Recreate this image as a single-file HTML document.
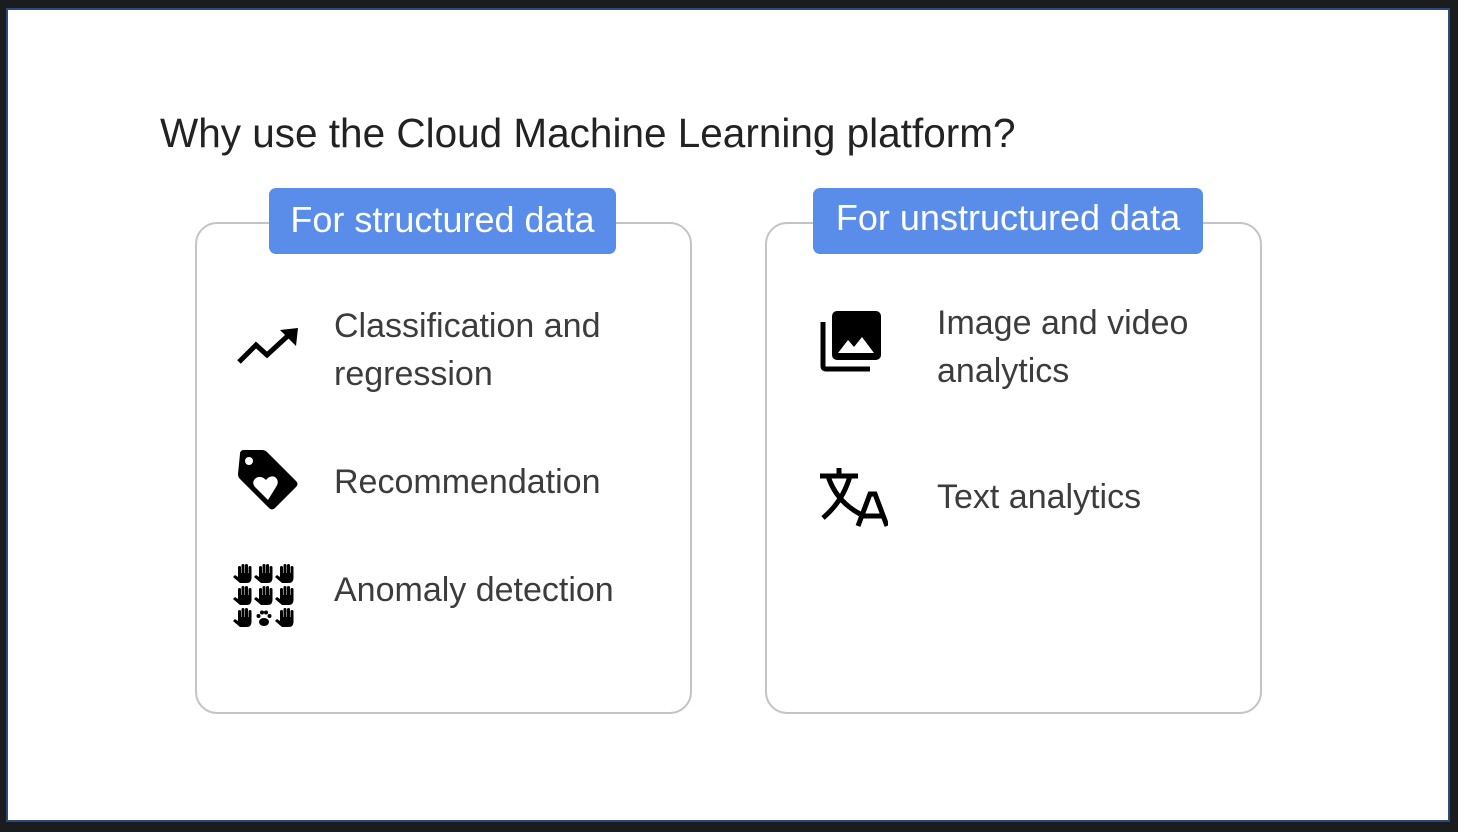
<!DOCTYPE html>
<html><head><style>
body{margin:0;width:1458px;height:832px;background:#1b1c1e;position:relative;overflow:hidden;font-family:"Liberation Sans",sans-serif}
.slide{position:absolute;left:6px;top:8px;width:1440px;height:810px;background:#fff;border:2px solid #2c4a7c}
.a{position:absolute}
.box{position:absolute;top:222px;width:493px;height:488px;border:2px solid #c4c4c4;border-radius:22px}
.pill{position:absolute;top:188px;height:66px;background:#5a8cea;border-radius:7px;color:#fff;font-size:36px;line-height:64px;text-align:center}
.t{position:absolute;font-size:34px;color:#3c3c3c;line-height:48px}
</style></head><body>
<div class="slide"></div>
<div class="a" style="left:160px;top:110px;font-size:40.5px;color:#222">Why use the Cloud Machine Learning platform?</div>
<div class="box" style="left:195px"></div>
<div class="box" style="left:765px"></div>
<div class="pill" style="left:269px;width:347px">For structured data</div>
<div class="pill" style="left:813px;width:390px;line-height:60px">For unstructured data</div>

<svg class="a" style="left:236px;top:326px" width="64" height="40" viewBox="0 0 64 40"><path d="M3 36 L20 19 L31 29 L56 6" fill="none" stroke="#000" stroke-width="5"/><path d="M44 4 L62 2 L60 20 Z" fill="#000"/></svg>
<div class="t" style="left:334px;top:302px">Classification and<br>regression</div>

<svg class="a" style="left:236px;top:448px" width="64" height="64" viewBox="0 0 64 64"><path d="M4 6 Q4 2 8 2 L26 2 Q29 2 31 4 L60 33 Q63 36 60 39 L39 60 Q36 63 33 60 L4 31 Q2 29 2 26 Z" fill="#000"/><circle cx="13" cy="13" r="4" fill="#fff"/><path d="M32 52 L19 39 Q15 34 20 30 Q25 27 30 32 Q34 27 39 29 Q44 33 40 39 Z" fill="#fff"/></svg>
<div class="t" style="left:334px;top:458px">Recommendation</div>

<svg class="a" style="left:232px;top:563px" width="64" height="66" viewBox="0 0 64 66">
<g id="h" fill="#000"><rect x="6" y="3" width="3" height="10" rx="1.5"/><rect x="9.5" y="1" width="3" height="12" rx="1.5"/><rect x="13" y="1" width="3" height="12" rx="1.5"/><rect x="16.5" y="3" width="3" height="10" rx="1.5"/><path d="M6 10 H19.5 V15 Q19.5 20 14.5 20 H8 L1 14 L3 12 L6 14 Z"/></g>
<use href="#h" x="21"/><use href="#h" x="42"/>
<use href="#h" y="22"/><use href="#h" x="21" y="22"/><use href="#h" x="42" y="22"/>
<use href="#h" y="44"/><use href="#h" x="42" y="44"/>
<g fill="#000"><ellipse cx="32" cy="59" rx="5" ry="4"/><circle cx="26.5" cy="53" r="2"/><circle cx="30" cy="49.5" r="2"/><circle cx="34" cy="49.5" r="2"/><circle cx="37.5" cy="53" r="2"/></g>
</svg>
<div class="t" style="left:334px;top:566px">Anomaly detection</div>

<svg class="a" style="left:818px;top:308px" width="66" height="66" viewBox="0 0 66 66"><path d="M5 14 V58 Q5 61 8 61 H52" fill="none" stroke="#000" stroke-width="5"/><rect x="14" y="3" width="49" height="49" rx="5" fill="#000"/><path d="M20 45 L30 32 L36 39 L44 29 L56 45 Z" fill="#fff"/></svg>
<div class="t" style="left:937px;top:299px">Image and video<br>analytics</div>

<svg class="a" style="left:818px;top:466px" width="70" height="64" viewBox="0 0 70 64"><path d="M2 10 H40 M21 2 V10 M10 10 Q18 35 42 48 M32 10 Q25 35 5 52" fill="none" stroke="#000" stroke-width="5"/><path d="M40 60 L52 28 H57 L69 60" fill="none" stroke="#000" stroke-width="5"/><path d="M45 50 H64" stroke="#000" stroke-width="5"/></svg>
<div class="t" style="left:937px;top:473px">Text analytics</div>
</body></html>
